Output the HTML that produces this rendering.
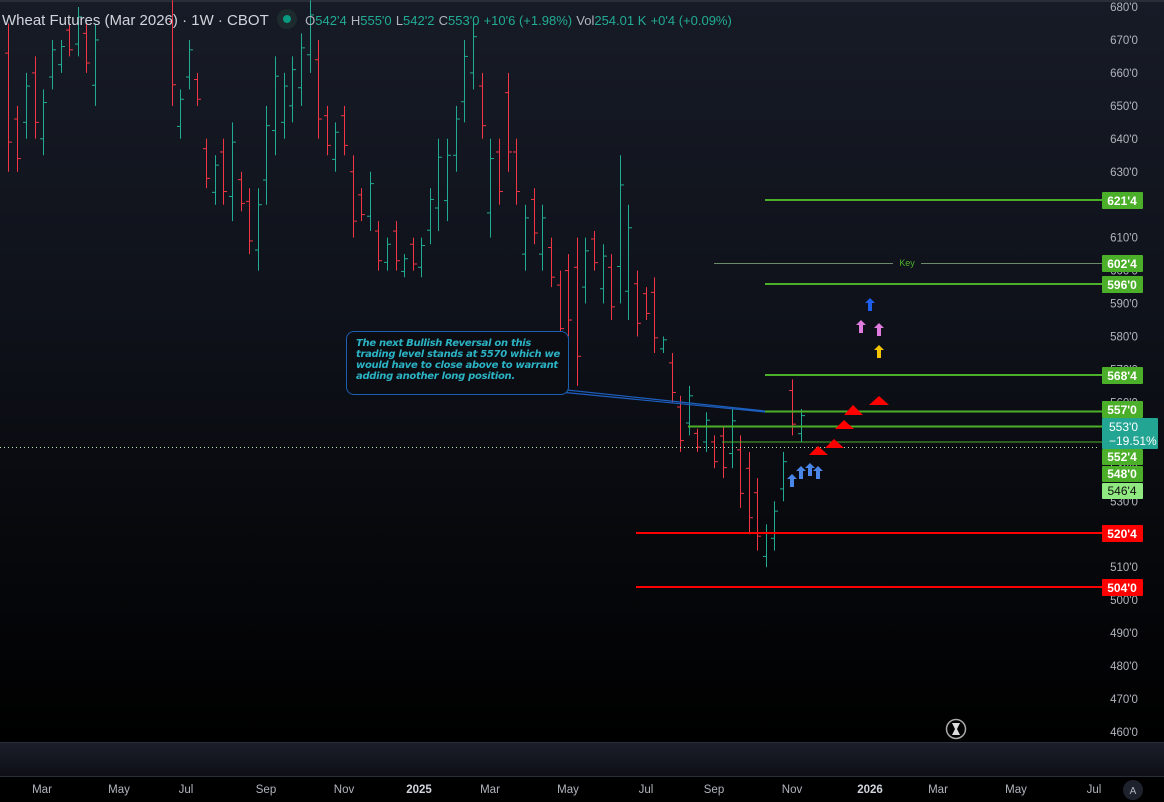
<!DOCTYPE html>
<html><head><meta charset="utf-8"><style>
html,body{margin:0;padding:0;background:#000;}
body{width:1164px;height:802px;overflow:hidden;position:relative;font-family:"Liberation Sans","DejaVu Sans",sans-serif;}
svg{position:absolute;left:0;top:0;}
.hdr{position:absolute;left:2px;top:9px;font-size:15px;color:#d1d4dc;white-space:nowrap;}
.hdr .v{font-size:13px;color:#22ab94;}
.hdr .k{font-size:13px;color:#b2b5be;}
.note{position:absolute;left:346px;top:331px;width:210px;height:54px;padding:6px 2px 2px 9px;border:1px solid #1d5fb0;border-radius:8px;background:#0b0d13;color:#2bb3c4;font-style:italic;font-weight:bold;font-size:10px;line-height:11px;font-family:"DejaVu Sans","Liberation Sans",sans-serif;letter-spacing:-0.3px;}
</style></head><body>
<svg id="s" width="1164" height="802" xmlns="http://www.w3.org/2000/svg">
<defs><linearGradient id="bg" x1="0" y1="0" x2="0" y2="1">
<stop offset="0" stop-color="#171b26"/><stop offset="0.45" stop-color="#0e1119"/><stop offset="1" stop-color="#000"/></linearGradient>
<linearGradient id="pn" x1="0" y1="0" x2="0" y2="1"><stop offset="0" stop-color="#1c1f2a"/><stop offset="1" stop-color="#0d0f15"/></linearGradient></defs>
<rect width="1164" height="742" fill="url(#bg)"/>
<rect y="0" width="1164" height="2" fill="#2a2e39"/>
<rect y="742" width="1164" height="35" fill="url(#pn)"/>
<rect y="742" width="1164" height="1" fill="#2a2e39"/>
<rect y="776" width="1164" height="1" fill="#2a2e39"/>
<rect y="777" width="1164" height="25" fill="#000"/>
<g id="bars"></g>
<g id="ax" font-size="11.5" fill="#b2b5be" text-anchor="middle"></g>
<line x1="0" y1="447.5" x2="1100" y2="447.5" stroke="#b8e6b0" stroke-width="1" stroke-dasharray="1 3"/>
<line x1="765" y1="200" x2="1102" y2="200" stroke="#4caf29" stroke-width="2"/>
<line x1="714" y1="263.5" x2="893" y2="263.5" stroke="#6a8a6a" stroke-width="1"/>
<line x1="921" y1="263.5" x2="1102" y2="263.5" stroke="#6a8a6a" stroke-width="1"/>
<line x1="765" y1="284" x2="1102" y2="284" stroke="#4caf29" stroke-width="2"/>
<line x1="765" y1="375" x2="1102" y2="375" stroke="#4caf29" stroke-width="2"/>
<line x1="765" y1="411.5" x2="1102" y2="411.5" stroke="#4caf29" stroke-width="2"/>
<line x1="688" y1="426.5" x2="1102" y2="426.5" stroke="#4caf29" stroke-width="2"/>
<line x1="722" y1="442" x2="1102" y2="442" stroke="#4caf29" stroke-width="1"/>
<line x1="636" y1="533" x2="1102" y2="533" stroke="#f00" stroke-width="2"/>
<line x1="636" y1="587" x2="1102" y2="587" stroke="#f00" stroke-width="2"/>
<text x="907" y="266" font-size="9" fill="#4caf29" text-anchor="middle">Key</text>
<path d="M548 388 L765 411 M560 392 L765 412" stroke="#1d5fc0" stroke-width="1.2" fill="none"/>
<g id="arr"></g>
<g fill="#f00">
<polygon points="809,455 818,446 828,455"/><polygon points="825,448 834,439 844,448"/>
<polygon points="835,429 844,420 854,429"/><polygon points="844,415 853,405 863,415"/>
<polygon points="869,405 879,396 889,405"/></g>
<g font-size="12" font-weight="bold" fill="#fff" text-anchor="middle">
<rect x="1102" y="192" width="41" height="17" rx="1" fill="#4caf29"/><text x="1122" y="205">621'4</text>
<rect x="1102" y="255" width="41" height="17" rx="1" fill="#4caf29"/><text x="1122" y="268">602'4</text>
<rect x="1102" y="276" width="41" height="17" rx="1" fill="#4caf29"/><text x="1122" y="289">596'0</text>
<rect x="1102" y="367" width="41" height="17" rx="1" fill="#4caf29"/><text x="1122" y="380">568'4</text>
<rect x="1102" y="401" width="41" height="17" rx="1" fill="#4caf29"/><text x="1122" y="414">557'0</text>
<rect x="1102" y="418" width="56" height="31" rx="1" fill="#22a592"/>
<text x="1109" y="431" text-anchor="start" font-weight="normal">553'0</text>
<text x="1109" y="445" text-anchor="start" font-weight="normal">−19.51%</text>
<rect x="1102" y="449" width="41" height="16" rx="1" fill="#4caf29"/><text x="1122" y="461">552'4</text>
<rect x="1102" y="466" width="41" height="16" rx="1" fill="#4caf29"/><text x="1122" y="478">548'0</text>
<rect x="1102" y="483" width="41" height="16" rx="1" fill="#90e880"/><text x="1122" y="495" fill="#111" font-weight="normal">546'4</text>
<rect x="1102" y="525" width="41" height="17" rx="1" fill="#f00"/><text x="1122" y="538">520'4</text>
<rect x="1102" y="579" width="41" height="17" rx="1" fill="#f00"/><text x="1122" y="592">504'0</text>
</g>
<circle cx="956" cy="729" r="9.5" fill="none" stroke="#aaa" stroke-width="1.5"/>
<path d="M952 723 h8 l-3 6 l3 6 h-8 l3 -6 z" fill="#ddd"/>
<g font-size="11.5" fill="#b2b5be" text-anchor="middle">
<text x="42" y="793">Mar</text><text x="119" y="793">May</text><text x="186" y="793">Jul</text><text x="266" y="793">Sep</text><text x="344" y="793">Nov</text><text x="419" y="793" font-weight="bold" fill="#d1d4dc">2025</text><text x="490" y="793">Mar</text><text x="568" y="793">May</text><text x="646" y="793">Jul</text><text x="714" y="793">Sep</text><text x="792" y="793">Nov</text><text x="870" y="793" font-weight="bold" fill="#d1d4dc">2026</text><text x="938" y="793">Mar</text><text x="1016" y="793">May</text><text x="1094" y="793">Jul</text></g>
<circle cx="1133" cy="790" r="10" fill="#1e222d"/><text x="1133" y="794" font-size="10" fill="#b2b5be" text-anchor="middle">A</text>
</svg>
<div class="hdr">Wheat Futures (Mar 2026) · 1W · CBOT &nbsp;<span style="display:inline-block;width:20px;height:20px;border-radius:50%;background:#1d2b2e;vertical-align:-4px;position:relative"><span style="position:absolute;left:6px;top:6px;width:8px;height:8px;border-radius:50%;background:#089981"></span></span>&nbsp; <span class="k">O</span><span class="v">542'4</span> <span class="k">H</span><span class="v">555'0</span> <span class="k">L</span><span class="v">542'2</span> <span class="k">C</span><span class="v">553'0</span> <span class="v">+10'6 (+1.98%)</span> <span class="k">Vol</span><span class="v">254.01 K</span> <span class="v">+0'4 (+0.09%)</span></div>
<div class="note">The next Bullish Reversal on this trading level stands at 5570 which we would have to close above to warrant adding another long position.</div>
<script>
var Y=function(p){return 7+(680-p)*3.295;};
var d=[[8,675,630,1],[17,650,630,1],[26,660,640,0],[35,665,640,1],[43,655,635,0],[52,670,655,0],[61,670,660,0],[69,675,665,1],[78,680,665,0],[86,675,660,1],[95,675,650,0],
[172,682,650,1],[180,655,640,0],[189,670,655,0],[197,660,650,1],[206,640,625,1],[215,635,620,0],[223,640,620,1],[232,645,615,0],[241,630,618,1],[249,625,605,1],[258,625,600,0],[266,650,620,0],[275,665,635,0],[284,660,640,0],[292,665,645,0],[301,672,650,0],[310,682,660,0],[318,670,640,1],[327,650,635,1],[335,645,630,0],[344,650,635,1],[353,635,610,1],[361,625,615,1],[370,630,612,0],[378,615,600,1],[387,610,600,0],[396,615,600,1],[404,605,598,0],[413,610,600,1],[421,610,598,0],[430,625,608,0],[438,640,612,0],[447,640,615,0],[456,650,630,0],[464,670,645,0],[473,675,655,0],[482,660,640,1],[490,640,610,0],[499,640,620,1],[508,660,630,1],[516,640,620,1],[525,620,600,0],[534,625,608,1],[542,620,600,0],[551,610,595,1],[560,600,578,1],[568,605,580,1],[577,610,565,1],[585,610,590,0],[594,612,600,1],[603,608,590,0],[611,605,585,1],[620,635,590,0],[628,620,585,0],[637,600,580,1],[646,595,585,1],[654,598,575,1],[663,580,575,0],[672,575,560,1],[680,562,545,1],[689,565,550,0],[697,552,545,1],[706,557,545,0],[714,550,540,1],[723,553,537,1],[732,558,540,0],[740,550,528,1],[749,545,520,1],[757,537,515,1],[766,523,510,0],[774,530,515,0],[783,545,530,0],[792,567,550,1],[801,558,548,0]];
var s='';d.forEach(function(b,i){var c=b[3]?'#f23645':'#22ab94';var h=Y(b[1]),l=Y(b[2]);var o=b[3]?h+(l-h)*0.2:l-(l-h)*0.25,cl=b[3]?l-(l-h)*0.2:h+(l-h)*0.2;
s+='<line x1="'+(b[0]+.5)+'" y1="'+h+'" x2="'+(b[0]+.5)+'" y2="'+l+'" stroke="'+c+'"/>'+'<line x1="'+(b[0]-3)+'" y1="'+o+'" x2="'+b[0]+'" y2="'+o+'" stroke="'+c+'"/>'+'<line x1="'+(b[0]+1)+'" y1="'+cl+'" x2="'+(b[0]+4)+'" y2="'+cl+'" stroke="'+c+'"/>';});
document.getElementById('bars').innerHTML=s;
var a='';for(var p=680;p>=460;p-=10){a+='<text x="1124" y="'+(Y(p)+4)+'">'+p+"'0</text>";}
document.getElementById('ax').innerHTML=a;
function ar(x,y,c){return '<path d="M'+(x-2)+' '+(y+13)+' V'+(y+5)+' H'+(x-5)+' L'+x+' '+y+' L'+(x+5)+' '+(y+5)+' H'+(x+2)+' V'+(y+13)+' Z" fill="'+c+'"/>';}
document.getElementById('arr').innerHTML=ar(792,474,'#4a86e8')+ar(801,466,'#4a86e8')+ar(810,463,'#4a86e8')+ar(818,466,'#4a86e8')+ar(870,298,'#1e5ee8')+ar(861,320,'#e07be0')+ar(879,323,'#e07be0')+ar(879,345,'#f5c400');
</script>
</body></html>
